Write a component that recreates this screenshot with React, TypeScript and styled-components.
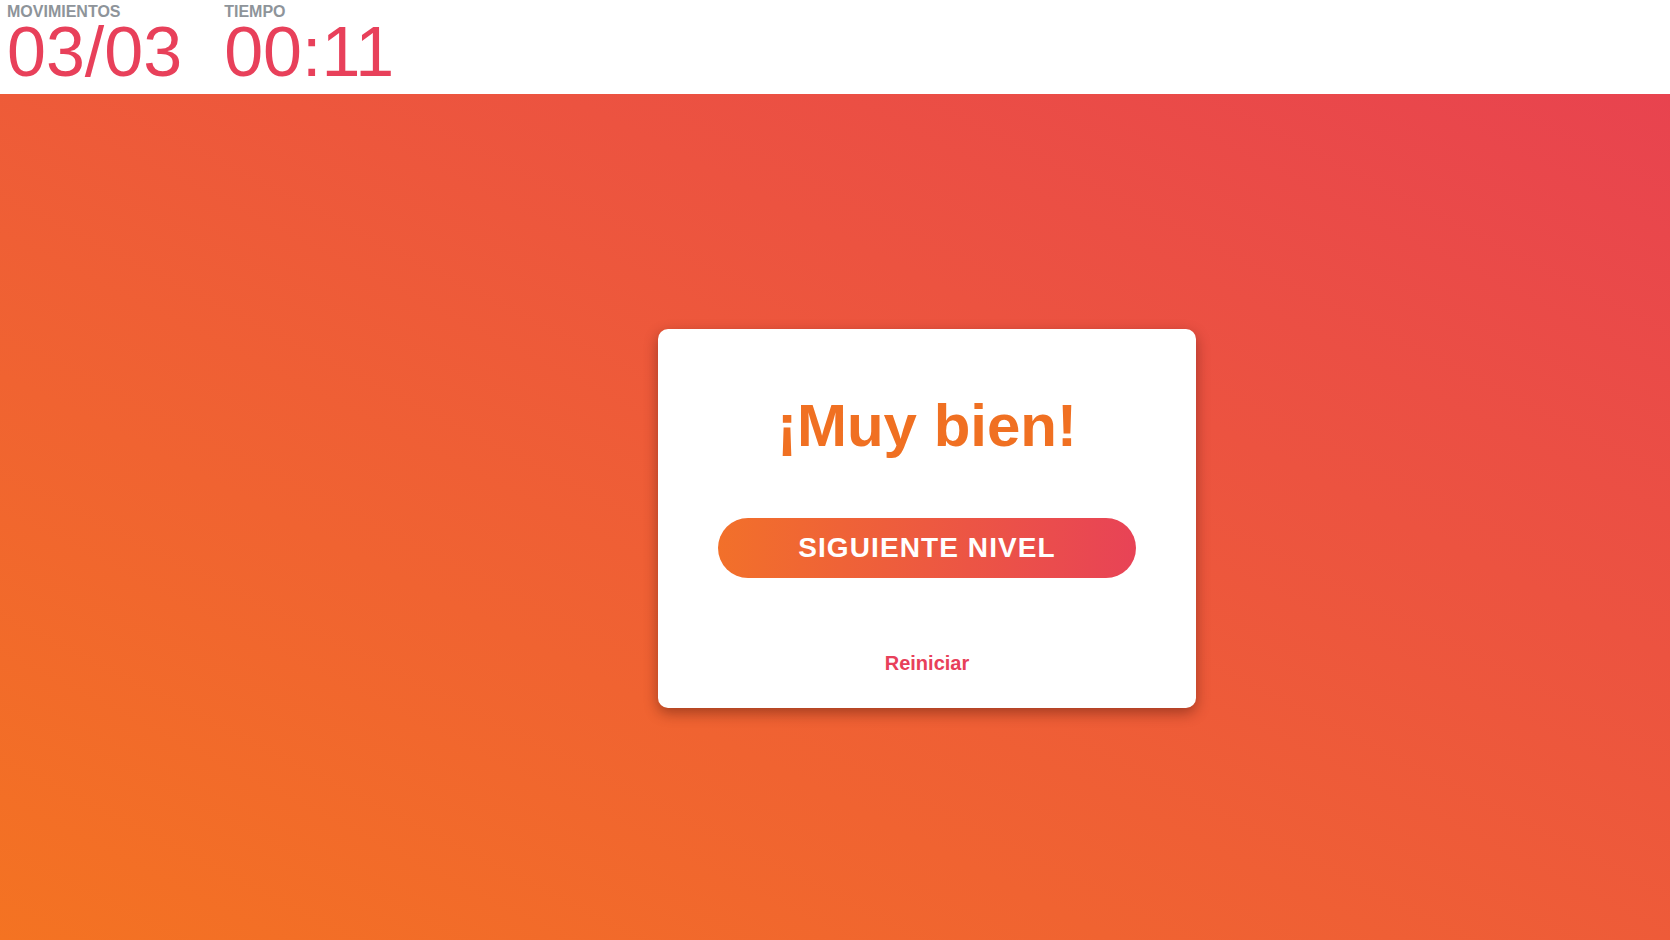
import React from "react";
import styled, { createGlobalStyle } from "styled-components";

const GlobalStyle = createGlobalStyle`
  html, body {
    margin: 0;
    padding: 0;
  }
  body {
    font-family: "Liberation Sans", Arial, sans-serif;
    background: #ffffff;
  }
  * { box-sizing: border-box; }
`;

const Page = styled.div`
  display: flex;
  flex-direction: column;
  min-height: 100vh;
`;

const Header = styled.header`
  height: 94px;
  background: #ffffff;
  display: flex;
  align-items: flex-start;
  gap: 42px;
  padding: 4px 0 0 7px;
`;

const Stat = styled.div`
  display: flex;
  flex-direction: column;
  align-items: flex-start;
`;

const StatLabel = styled.span`
  font-size: 16px;
  line-height: 16px;
  font-weight: 700;
  color: #8e949a;
  text-transform: uppercase;
`;

const StatValue = styled.span`
  margin-top: 4px;
  font-size: 70px;
  line-height: 56px;
  font-weight: 400;
  color: #e8405a;
`;

const Stage = styled.main`
  flex: 1;
  display: flex;
  align-items: center;
  justify-content: center;
  padding: 3px 0 0 184px;
  background: linear-gradient(to top right, #f47322 0%, #e8434f 100%);
`;

const Card = styled.section`
  width: 538px;
  background: #ffffff;
  border-radius: 10px;
  box-shadow: 0 5px 14px rgba(70, 20, 10, 0.45);
  padding: 62px 60px 33px;
  display: flex;
  flex-direction: column;
  align-items: stretch;
  text-align: center;
`;

const Title = styled.h1`
  margin: 0;
  font-size: 60px;
  line-height: 69px;
  font-weight: 700;
  color: #f07022;
`;

const PrimaryButton = styled.button`
  margin-top: 58px;
  height: 60px;
  border: none;
  border-radius: 30px;
  background: linear-gradient(to right, #f2702a 0%, #e84356 100%);
  color: #ffffff;
  font-family: "Liberation Sans", Arial, sans-serif;
  font-size: 28px;
  font-weight: 700;
  letter-spacing: 1.1px;
  text-transform: uppercase;
  cursor: pointer;
`;

const LinkButton = styled.button`
  margin-top: 74px;
  align-self: center;
  border: none;
  background: none;
  padding: 0;
  height: 23px;
  font-family: "Liberation Sans", Arial, sans-serif;
  font-size: 20px;
  line-height: 23px;
  font-weight: 700;
  color: #e8405a;
  cursor: pointer;
`;

export default function App() {
  return (
    <>
      <GlobalStyle />
      <Page>
        <Header>
          <Stat>
            <StatLabel>Movimientos</StatLabel>
            <StatValue>03/03</StatValue>
          </Stat>
          <Stat>
            <StatLabel>Tiempo</StatLabel>
            <StatValue>00:11</StatValue>
          </Stat>
        </Header>
        <Stage>
          <Card>
            <Title>¡Muy bien!</Title>
            <PrimaryButton>Siguiente nivel</PrimaryButton>
            <LinkButton>Reiniciar</LinkButton>
          </Card>
        </Stage>
      </Page>
    </>
  );
}
